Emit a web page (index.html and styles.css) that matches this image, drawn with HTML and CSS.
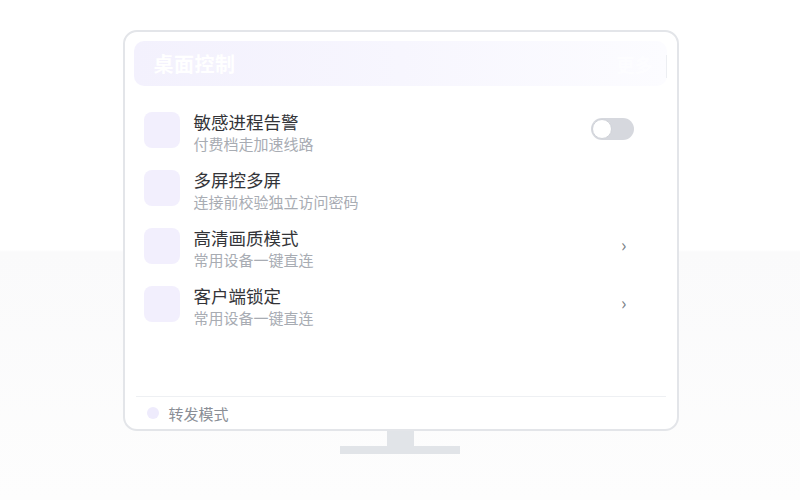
FILE: index.html
```html
<!DOCTYPE html>
<html lang="zh-CN">
<head>
<meta charset="utf-8">
<title>桌面控制</title>
<link rel="stylesheet" href="styles.css">
</head>
<body>
<div class="stage">
  <div class="monitor">
    <div class="header">
      <span class="title">桌面控制</span>
      <span class="header-extra">更多</span>
      <span class="header-edge"></span>
    </div>
    <div class="list">
      <div class="row">
        <div class="icon"></div>
        <div class="text">
          <div class="name">敏感进程告警</div>
          <div class="desc">付费档走加速线路</div>
        </div>
        <div class="trail"><span class="toggle"><span class="knob"></span></span></div>
      </div>
      <div class="row">
        <div class="icon"></div>
        <div class="text">
          <div class="name">多屏控多屏</div>
          <div class="desc">连接前校验独立访问密码</div>
        </div>
        <div class="trail"></div>
      </div>
      <div class="row">
        <div class="icon"></div>
        <div class="text">
          <div class="name">高清画质模式</div>
          <div class="desc">常用设备一键直连</div>
        </div>
        <div class="trail"><span class="chev">›</span></div>
      </div>
      <div class="row">
        <div class="icon"></div>
        <div class="text">
          <div class="name">客户端锁定</div>
          <div class="desc">常用设备一键直连</div>
        </div>
        <div class="trail"><span class="chev">›</span></div>
      </div>
    </div>
    <div class="footer">
      <span class="dot"></span>
      <span class="footer-text">转发模式</span>
    </div>
  </div>
  <div class="neck"></div>
  <div class="base"></div>
</div>
</body>
</html>
```

FILE: styles.css
```css
html, body {
  margin: 0;
  padding: 0;
}
body {
  width: 800px;
  height: 500px;
  overflow: hidden;
  font-family: "Noto Sans CJK SC", "Noto Sans", sans-serif;
  background: linear-gradient(to bottom, #ffffff 0, #ffffff 250px, #fafafb 252px, #fdfdfd 500px);
}
.stage {
  display: flex;
  flex-direction: column;
  align-items: center;
  padding-top: 30px;
}
.monitor {
  box-sizing: border-box;
  width: 556px;
  height: 401px;
  margin-left: 1px;
  border: 2px solid #e3e5e9;
  border-radius: 14px;
  background: #ffffff;
  display: flex;
  flex-direction: column;
  padding: 9px 10px 0 9px;
}
.header {
  position: relative;
  height: 45px;
  border-radius: 10px;
  background: linear-gradient(to right, #f3f1fd 0%, #f7f6fe 50%, #fcfcff 100%);
  display: flex;
  align-items: center;
  padding-left: 20px;
}
.title {
  color: #ffffff;
  font-size: 20px;
  font-weight: 700;
  letter-spacing: 0.5px;
}
.header-extra {
  margin-left: auto;
  margin-right: 14px;
  color: rgba(255, 255, 255, 0.6);
  font-size: 18px;
  font-weight: 700;
}
.header-edge {
  position: absolute;
  right: 0;
  top: 14px;
  width: 1px;
  height: 23px;
  background: #eceef2;
}
.list {
  flex: 1;
  display: flex;
  flex-direction: column;
  gap: 16px;
  padding: 25px 0 0 10px;
}
.row {
  display: flex;
  align-items: flex-start;
  height: 42px;
}
.icon {
  width: 36px;
  height: 36px;
  margin-top: 1px;
  border-radius: 8px;
  background: #f2effd;
  flex: none;
}
.text {
  margin-left: 14px;
  flex: 1;
}
.name {
  font-size: 17.5px;
  line-height: 22px;
  color: #333438;
}
.desc {
  margin-top: 2px;
  font-size: 15px;
  line-height: 18px;
  color: #a8acb3;
}
.trail {
  width: 44px;
  height: 42px;
  margin-right: 33px;
  display: flex;
  align-items: center;
  justify-content: flex-end;
}
.toggle {
  box-sizing: border-box;
  width: 43px;
  height: 22px;
  margin-top: -6px;
  border-radius: 11px;
  background: #d6d8de;
  padding: 1px;
  display: flex;
}
.knob {
  box-sizing: border-box;
  width: 20px;
  height: 20px;
  border-radius: 50%;
  background: #ffffff;
  border: 1px solid #d0d3d9;
}
.chev {
  color: #7a7f87;
  font-size: 18px;
  line-height: 18px;
  margin-right: 7px;
  margin-top: -8px;
}
.footer {
  height: 32px;
  border-top: 1px solid #eef0f3;
  margin: 0 1px 0 2px;
  display: flex;
  align-items: center;
  padding-left: 11px;
}
.dot {
  width: 12px;
  height: 12px;
  border-radius: 50%;
  background: #eeebfc;
}
.footer-text {
  margin-left: 10px;
  font-size: 15px;
  color: #8a8e96;
}
.neck {
  width: 27px;
  height: 15px;
  background: #e1e4e8;
}
.base {
  width: 120px;
  height: 8px;
  background: #e1e4e8;
}
```
